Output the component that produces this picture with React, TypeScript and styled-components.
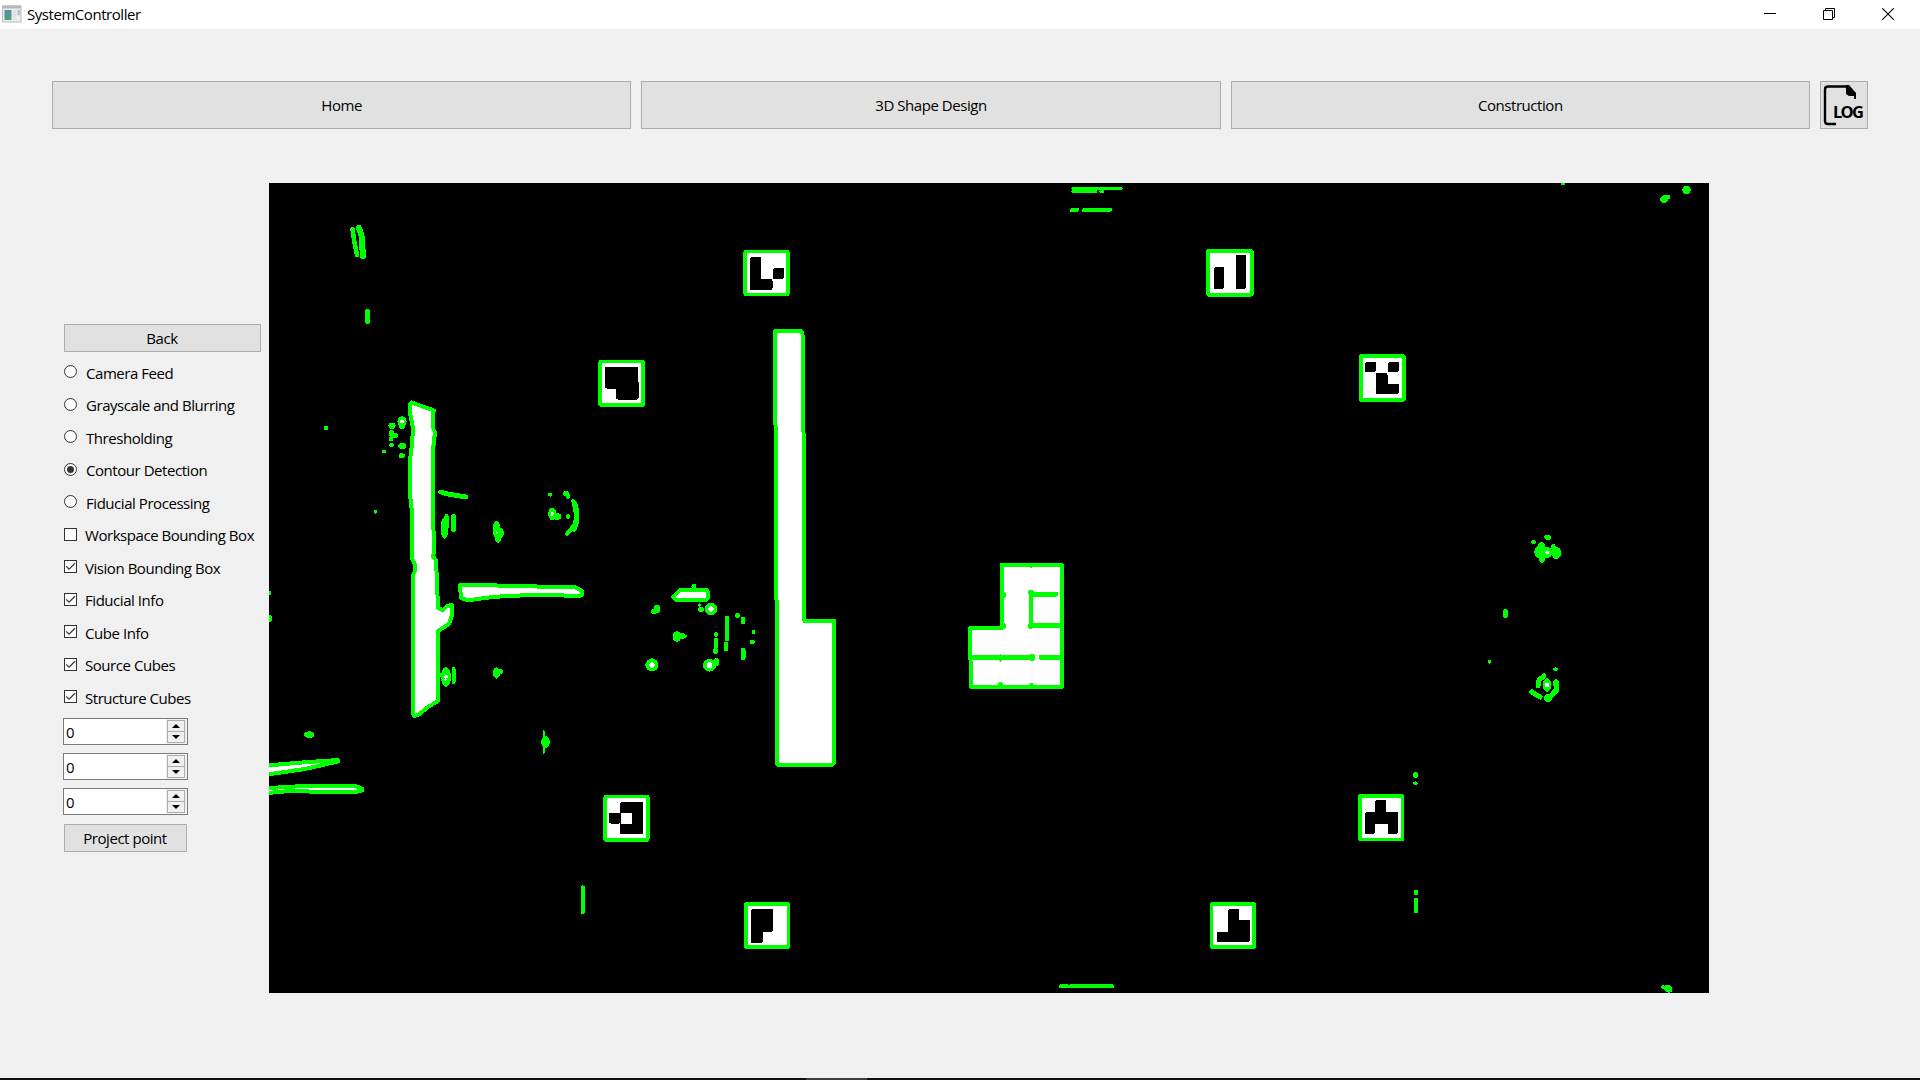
import React from "react";
import styled, { createGlobalStyle } from "styled-components";

const Global = createGlobalStyle`
  * { box-sizing: border-box; }
  html, body { margin: 0; padding: 0; background: #f0f0f0; }
  body { overflow: hidden; }
`;

const Window = styled.div`
  width: 1920px;
  height: 1080px;
  display: flex;
  flex-direction: column;
  background: #f0f0f0;
  color: #000;
  font-family: "Open Sans", "Noto Sans", sans-serif;
  font-size: 15px;
  line-height: 20px;
  letter-spacing: -0.45px;
`;

const TitleBar = styled.header`
  height: 29px;
  flex: none;
  display: flex;
  align-items: center;
  background: #fff;
  padding: 0 0 2px 2px;
`;

const Title = styled.span`
  margin-left: 5px;
  flex: 1;
`;

const Controls = styled.div`
  display: flex;
  gap: 47px;
  padding: 1px 26px 0 0;
  svg { display: block; width: 12px; height: 12px; }
`;

const NavBar = styled.nav`
  display: flex;
  gap: 10px;
  height: 48px;
  margin: 52px 52px 0;
  flex: none;
`;

const Button = styled.button<{ $w?: number }>`
  height: 28px;
  width: ${(p) => (p.$w ? `${p.$w}px` : "auto")};
  flex: none;
  padding: 0 1px 0 0;
  border: 1px solid #adadad;
  border-radius: 0;
  background: #e1e1e1;
  color: #000;
  font: inherit;
  letter-spacing: inherit;
`;

const NavButton = styled(Button)`
  flex: 1 1 0;
  height: 48px;
  padding: 0;
`;

const LogButton = styled(Button)`
  height: 48px;
  padding: 0;
  letter-spacing: 0;
  svg { display: block; overflow: visible; }
`;

const Main = styled.main`
  display: flex;
  flex: none;
  margin-top: 54px;
  height: 810px;
`;

const Sidebar = styled.aside`
  width: 269px;
  padding: 141px 8px 0 64px;
  display: flex;
  flex-direction: column;
`;

const Options = styled.div`
  display: flex;
  flex-direction: column;
  margin: 3.6px 0 5px;
`;

const Option = styled.label<{ $gap: number }>`
  display: flex;
  align-items: center;
  height: 32.49px;
  gap: ${(p) => p.$gap}px;
  white-space: nowrap;
  svg { flex: none; display: block; }
  span { padding-top: 2px; }
`;

const Spins = styled.div`
  display: flex;
  flex-direction: column;
  gap: 8px;
  margin: 0 0 9px -1px;
`;

const SpinBox = styled.div`
  width: 125px;
  height: 27px;
  display: flex;
  align-items: center;
  border: 1px solid #7a7a7a;
  background: #fff;
  padding-left: 2px;
`;

const SpinValue = styled.span`
  flex: 1;
  padding-top: 1px;
`;

const Steppers = styled.div`
  width: 21px;
  height: 25px;
  padding: 1px 2px 1px 1px;
  background: #f0f0f0;
  display: flex;
  flex-direction: column;
`;

const Step = styled.div<{ $last?: boolean }>`
  flex: 1;
  border: 1px solid #adadad;
  border-top-width: ${(p) => (p.$last ? 0 : 1)}px;
  display: flex;
  align-items: center;
  padding-left: 4px;
`;

const Feed = styled.section`
  width: 1440px;
  height: 810px;
  background: #000;
  svg { display: block; }
`;

const TaskEdge = styled.footer`
  margin-top: auto;
  height: 2px;
  background: #101010;
  display: flex;
  padding-left: 806px;
`;

const TaskActive = styled.div`
  width: 61px;
  background: #3c3c3c;
`;

const AppIcon = () => (
  <svg width="20" height="18" viewBox="0 0 20 18">
    <defs>
      <linearGradient id="pane" x1="0" y1="0" x2="1" y2="1">
        <stop offset="0" stopColor="#5b84b8" />
        <stop offset="1" stopColor="#4aa86a" />
      </linearGradient>
    </defs>
    <rect x="0.5" y="1" width="18.5" height="16" fill="#eceef0" stroke="#b8bcc0" />
    <rect x="0.5" y="0.5" width="18.5" height="3" fill="#b4b8bc" />
    <rect x="2.5" y="5" width="7" height="10" fill="url(#pane)" />
    <rect x="11" y="5" width="3.5" height="10" fill="#e0e2e4" />
    <rect x="15.5" y="5" width="2.5" height="5" fill="#a9c4cc" />
  </svg>
);

const LogIcon = () => (
  <svg width="46" height="46" viewBox="1821 82 46 46">
    <path d="M1836 124H1828Q1825 124 1825 121V89.500Q1825 86.500 1828 86.500H1847" fill="none" stroke="#000" strokeWidth="2.400" />
    <path d="M1846 85H1849L1856 93V99H1854V96H1849L1846 94Z" />
    <text x="1833" y="118" fontFamily="Open Sans" fontWeight="bold" fontSize="16.500" textLength="31" lengthAdjust="spacing">LOG</text>
  </svg>
);

const RadioMark = ({ on }: { on: boolean }) => (
  <svg width="13" height="13" viewBox="0 0 13 13">
    <circle cx="6.500" cy="6.500" r="6" fill="#fff" stroke="#333" />
    {on && <circle cx="6.500" cy="6.500" r="3.500" fill="#333" />}
  </svg>
);

const CheckMark = ({ on }: { on: boolean }) => (
  <svg width="13" height="13" viewBox="0 0 13 13">
    <rect x="0.500" y="0.500" width="12" height="12" fill="#fff" stroke="#333" />
    {on && <path d="M2.200 6.300L5 9.200L11 3.300" fill="none" stroke="#333" strokeWidth="1.200" />}
  </svg>
);

type Cell = [number, number, number, number];
type MarkerData = { box: Cell; cells: Cell[]; holes?: Cell[] };

// box and cells are [left, top, right, bottom]
const markers: MarkerData[] = [
  { box: [743.5, 249.5, 789.5, 296.5], cells: [[750, 257, 761, 290], [750, 279, 772.5, 290], [773, 268, 784, 279]] },
  { box: [598.5, 359.5, 645, 407], cells: [[605, 366.7, 638.3, 388.5], [616, 380, 638.5, 399.5]] },
  { box: [603.5, 794.5, 649.5, 842], cells: [[620, 802, 643, 834.3], [609, 812.5, 620.5, 823.5]], holes: [[620.5, 812.5, 632, 823.5]] },
  { box: [744, 902, 790.3, 949.3], cells: [[751, 909, 773, 932], [751, 920, 763, 943]] },
  { box: [1206, 249, 1253.7, 296.7], cells: [[1214, 267, 1224, 289], [1235.5, 255, 1246, 289]] },
  { box: [1359, 354, 1405.7, 402], cells: [[1365, 362, 1376, 372], [1388, 362, 1399, 372], [1376, 372.5, 1387.5, 394], [1376, 384, 1399, 394]] },
  { box: [1358, 794, 1404.3, 841.5], cells: [[1375, 800, 1386, 820], [1365, 812, 1398, 823.5], [1365, 812, 1375, 834], [1388, 812, 1398, 834]] },
  { box: [1209.7, 902, 1256, 949], cells: [[1228.3, 909, 1239, 932], [1228.3, 920, 1250, 942], [1216.500, 932, 1250, 942]] },
];

const Marker = ({ box: [l, t, r, b], cells, holes = [] }: MarkerData) => (
  <g>
    <rect x={l + 1.8} y={t + 2} width={r - l - 3.6} height={b - t - 4} rx="1.500" fill="#fff" stroke="#0f0" strokeWidth="3.900" />
    {cells.map(([x, y, x2, y2], i) => (
      <rect key={i} x={x} y={y} width={x2 - x} height={y2 - y} rx="2" fill="#000" />
    ))}
    {holes.map(([x, y, x2, y2], i) => (
      <rect key={i} x={x} y={y} width={x2 - x} height={y2 - y} fill="#fff" />
    ))}
  </g>
);

// Filled regions with their detected outline
const regions = [
  "M411.5 402.500L434 410.500L432.500 412L433 428L435 432L433 450L433 490L433 520L434 540L434 553L432.500 556L436 560L437 582L438 608L443 610L447 606L452 605L452 615L449 624L438 631L438 701L428 707L418 715L414 716L412.500 712V576L414.500 572V563L412 559V512L410 495V460L412 444L413 428L410 413V404Z",
  "M460 585L497 585.500L576 587.500L582 591V595L580 596L548 595L520 595.500L500 596.500L484 598L468 600.500L461 598Z",
  "M267 765.500L302 762.500L338 760L338 761.500L305 769L267 774.500Z",
  "M267 788L290 787L300 786H355L362 788.500V790.500L355 792H318L300 791L284 791.500L267 793Z",
  "M673 597L680 590H707L708 592V598L706 600H676Z",
  "M775 331H801L802.500 333L804 480L804.500 621H834V763L832 765H778L777 764L776.500 600L776 450L775 400Z",
  "M1001.500 565H1061.700V687H971L970.500 660L969.700 628.300H1001.500Z",
];

// Open strokes: [path, width]
const strokes: [string, number][] = [
  ["M352.500 229L354 240L357 255", 4.5], ["M359 228L361.500 236L363 256", 6], ["M367.500 311V322", 4.7],
  ["M440.500 492L448 494L466 497", 4.8], ["M573 501Q579 510 576.500 522L567 534", 4], ["M574.500 504Q579 517 574 529", 5.5],
  ["M453.500 516V530", 4.5], ["M453.500 669V682", 4], ["M543.500 731V753", 2],
  ["M582.700 887.500V912", 4.3], ["M727 618V639", 4.5], ["M726 644V649", 4.3], ["M716 634V635", 3.5], ["M716 640V646", 4.3], ["M715.500 650V652", 4.5],
  ["M743 619V622", 4.3], ["M743 650V658", 5], ["M683 636H686", 3],
  ["M971 657.300H1033M1041 657.300H1061", 4.8], ["M1031 594.300H1056M1031 594V626M1031 625.500H1061", 4.700],
  ["M1416.200 900V911", 4.5], ["M1505.500 611V616", 4.500],
  ["M1073 188.500H1121", 3.2], ["M1073 191.500H1096M1101 191.500H1103", 3], ["M1072 210H1077M1084 210H1110", 4], ["M1061 986.300H1067M1071 986.300H1112", 4.2],
  ["M1544 676L1539 680L1538 686", 5], ["M1532 692L1540 697", 5], ["M1556 682L1556.500 690L1552 695", 5.5],
];

// Small blobs: [cx, cy, rx, ry, whiteCore]
const blobs: [number, number, number, number, number?][] = [
  [326, 428, 2.3, 2.2], [402, 421.5, 4.6, 5.2, 2], [402, 426, 3, 3], [392, 425.7, 3.6, 3], [391.5, 433.5, 2.8, 3.4], [394, 435.5, 3.8, 2.5], [391, 439, 2, 2.5], [391.5, 445, 2.4, 2.2], [402.3, 446, 3.9, 3.1],
  [384, 451.5, 2, 2], [401.7, 455.7, 3.2, 2.5], [375.5, 511.7, 2, 2],
  [550.3, 494.6, 2.2, 2], [566, 493.5, 2.8, 2.8], [568, 496, 2.5, 2.8], [552.3, 514, 4.1, 6.2, 1.8], [557, 516.5, 4.3, 3.2], [568, 516.5, 2.2, 2.2],
  [444.5, 528, 4, 10.5], [446.5, 522, 3, 8.5], [496.5, 529.5, 3.8, 8.8], [500, 533, 3.8, 5.5], [498, 538.5, 2.8, 4.3], [497, 532.5, 1, 1, 1], [446, 677, 5, 10, 1.7], [445.5, 679.5, 1.5, 1.5, 1.2], [440.5, 675, 3, 2], [496.5, 673, 3.4, 5.7], [499.5, 671.5, 3.2, 3],
  [269.5, 593, 2, 2], [269, 618.5, 3.3, 3.7], [309.3, 734.7, 5.2, 3.4], [545.5, 742, 4.3, 5.8],
  [694, 586.5, 2.5, 2.5], [657, 609, 3.2, 4], [653.8, 611.7, 2.8, 2.5], [699.5, 605, 1.8, 1.8], [701, 609.5, 3, 2.6], [711, 609, 6.5, 6.2, 2.8],
  [677, 636.5, 4.4, 5.2], [682, 636, 3.5, 2.7], [737.3, 615.5, 2.8, 2.2], [753.5, 632, 2, 2.2], [752.3, 642, 2.5, 2.3],
  [652, 665, 6.6, 6.6, 2.8], [709.5, 665.2, 6.5, 6.3, 3], [716.5, 662, 2.5, 4],
  [1003, 595, 3, 3], [1003, 626, 3, 3], [1031, 592.5, 2.8, 2.8], [1030.5, 626, 3, 3], [1031, 565.5, 2.3, 2.3],
  [1000.5, 658, 1.8, 3.8], [1032, 657.5, 3.5, 3.7], [1000.5, 685.5, 2.7, 3.2], [1031.5, 685.5, 2.3, 2.7],
  [1415.5, 775, 2.5, 2.9], [1415.5, 783.3, 2.3, 2], [1416, 892.5, 2.4, 2.9],
  [1547.7, 537.3, 3.4, 2.6], [1533.4, 542, 2.3, 2.3], [1539, 552, 4.6, 6.2], [1541.5, 547, 3.6, 5.2], [1542, 557.5, 3.6, 5.2], [1547.2, 552.5, 4.7, 5.7, 2], [1556.3, 553, 4.6, 6.3], [1553.5, 547, 2.3, 2.7],
  [1489.5, 661.7, 1.8, 2], [1555.5, 669.2, 2.6, 1.8], [1547, 685, 4.4, 6.7, 2.4], [1548, 698, 3.8, 4.5],
  [1563, 184, 2, 1.3], [1686.500, 190, 4.2, 4], [1664, 199.500, 4, 3.3], [1666.5, 197, 4, 2.3], [1667.5, 988, 4.4, 3, 1], [1669, 990, 3.2, 2.700], [1663, 987, 2.7, 1.8],
];

const ContourView = () => (
  <svg width="1440" height="810" viewBox="269 183 1440 810" shapeRendering="crispEdges">
    <rect x="269" y="183" width="1440" height="810" fill="#000" />
    {regions.map((d, i) => (
      <path key={i} d={d} fill="#fff" stroke="#0f0" strokeWidth="4" strokeLinejoin="round" />
    ))}
    {strokes.map(([d, w], i) => (
      <path key={i} d={d} fill="none" stroke="#0f0" strokeWidth={w} strokeLinecap="round" strokeLinejoin="round" />
    ))}
    {blobs.map(([cx, cy, rx, ry, core], i) => (
      <g key={i}>
        <ellipse cx={cx} cy={cy} rx={rx} ry={ry} fill="#0f0" />
        {core && <circle cx={cx} cy={cy} r={core} fill="#fff" />}
      </g>
    ))}
    {markers.map((m, i) => <Marker key={i} {...m} />)}
  </svg>
);

const stages = ["Camera Feed", "Grayscale and Blurring", "Thresholding", "Contour Detection", "Fiducial Processing"];
const overlays = ["Workspace Bounding Box", "Vision Bounding Box", "Fiducial Info", "Cube Info", "Source Cubes", "Structure Cubes"];

export default function App() {
  return (
    <Window>
      <Global />
      <TitleBar>
        <AppIcon />
        <Title>SystemController</Title>
        <Controls>
          <svg viewBox="0 0 12 12"><path d="M0 5.500H12" stroke="#000" /></svg>
          <svg viewBox="0 0 12 12"><path d="M0.500 2.500H9.500V11.500H0.500ZM2.500 2.500V0.500H11.500V9.500H9.500" fill="none" stroke="#000" /></svg>
          <svg viewBox="0 0 12 12"><path d="M0.300 0.300L11.700 11.700M11.700 0.300L0.300 11.700" stroke="#000" strokeWidth="1.100" /></svg>
        </Controls>
      </TitleBar>
      <NavBar>
        <NavButton>Home</NavButton>
        <NavButton>3D Shape Design</NavButton>
        <NavButton>Construction</NavButton>
        <LogButton $w={48}><LogIcon /></LogButton>
      </NavBar>
      <Main>
        <Sidebar>
          <Button $w={197}>Back</Button>
          <Options>
            {stages.map((name) => (
              <Option key={name} $gap={9}>
                <RadioMark on={name === "Contour Detection"} />
                <span>{name}</span>
              </Option>
            ))}
            {overlays.map((name, i) => (
              <Option key={name} $gap={8}>
                <CheckMark on={i > 0} />
                <span>{name}</span>
              </Option>
            ))}
          </Options>
          <Spins>
            {[0, 0, 0].map((value, i) => (
              <SpinBox key={i}>
                <SpinValue>{value}</SpinValue>
                <Steppers>
                  <Step><svg width="8" height="4"><path d="M0 4L4 0L8 4Z" /></svg></Step>
                  <Step $last><svg width="8" height="4"><path d="M0 0L4 4L8 0Z" /></svg></Step>
                </Steppers>
              </SpinBox>
            ))}
          </Spins>
          <Button $w={123}>Project point</Button>
        </Sidebar>
        <Feed><ContourView /></Feed>
      </Main>
      <TaskEdge><TaskActive /></TaskEdge>
    </Window>
  );
}
